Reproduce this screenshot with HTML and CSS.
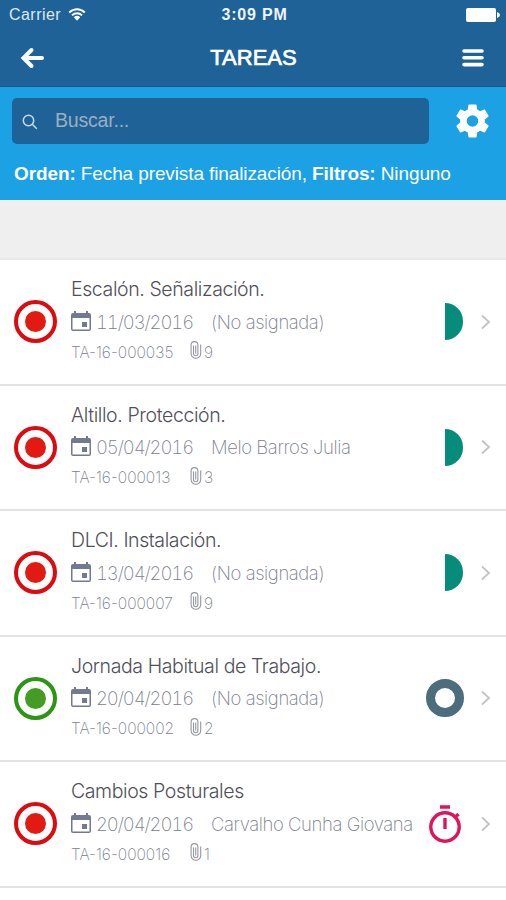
FILE: index.html
```html
<!DOCTYPE html>
<html lang="es">
  <head>
    <meta charset="UTF-8" />
    <meta name="viewport" content="width=device-width, initial-scale=1.0" />
    <title>Tareas</title>
    <link rel="stylesheet" href="styles.css">
  </head>
  <body>
    <!-- Iconos compartidos -->
    <svg class="sprite">
      <symbol id="i-calendar" viewBox="0 0 20 20">
        <path d="M0 4a2 2 0 0 1 2-2h1V0h2v2h10V0h2v2h1a2 2 0 0 1 2 2v14a2 2 0 0 1-2 2H2a2 2 0 0 1-2-2zM1.500 7v11.500h17V7zM11 11h5v5h-5z" fill-rule="evenodd" />
      </symbol>
      <symbol id="i-clip" viewBox="0 0 12 18">
        <path d="M3.500 4.500V12.500a2.200 2.200 0 0 0 4.400 0V4a3.400 3.400 0 0 0-6.800 0v8.500a4.800 4.800 0 0 0 9.600 0V3.500M5.700 4.500v8" />
      </symbol>
      <symbol id="i-chevron" viewBox="0 0 10 16">
        <path d="M1 1.500L8 8l-7 6.500" />
      </symbol>
    </svg>

    <header class="top">
      <div class="status-bar">
        <div class="carrier">
          <span>Carrier</span>
          <svg class="wifi" viewBox="0 0 18 13">
            <path d="M1.200 4.500a11 11 0 0 1 15.600 0M4 7.400a7 7 0 0 1 10 0" />
            <path class="wifi-dot" d="M5.800 9.200a4.500 4.500 0 0 1 6.400 0L9 12.800z" />
          </svg>
        </div>
        <div class="clock">3:09 PM</div>
        <svg class="battery" viewBox="0 0 34 14">
          <rect width="30" height="14" rx="2" />
          <path d="M31 4q3 1 3 3t-3 3z" />
        </svg>
      </div>
      <nav class="nav-bar">
        <svg class="back" viewBox="0 0 24 22">
          <path d="M11.500 3L3.500 11l8 8M4 11h18" />
        </svg>
        <h1>TAREAS</h1>
        <svg class="menu" viewBox="0 0 22 18">
          <path d="M2 2h18M2 8.800h18M2 15.600h18" />
        </svg>
      </nav>
    </header>

    <section class="search">
      <div class="search-row">
        <div class="search-box">
          <svg class="lens" viewBox="0 0 16 16">
            <circle cx="6.500" cy="6.500" r="5.200" />
            <path d="M10.500 10.500l4.300 4.300" />
          </svg>
          <span>Buscar...</span>
        </div>
        <svg class="gear" viewBox="2 2 20 20">
          <path d="M19.430 12.980c.04-.32.070-.64.070-.98s-.03-.66-.07-.98l2.110-1.650c.19-.15.240-.42.120-.64l-2-3.460c-.12-.22-.39-.3-.61-.22l-2.490 1c-.52-.4-1.080-.73-1.690-.98l-.38-2.650C14.460 2.180 14.250 2 14 2h-4c-.25 0-.46.180-.49.420l-.38 2.650c-.61.250-1.170.590-1.690.980l-2.490-1c-.23-.09-.49 0-.61.220l-2 3.460c-.13.220-.07.490.120.640l2.110 1.650c-.04.320-.07.650-.07.980s.030.660.070.980l-2.110 1.650c-.19.150-.24.420-.12.640l2 3.460c.12.220.390.300.610.220l2.490-1c.52.400 1.080.730 1.690.980l.38 2.650c.03.240.240.420.490.420h4c.25 0 .46-.18.490-.42l.38-2.650c.61-.25 1.170-.59 1.690-.98l2.490 1c.23.090.490 0 .610-.22l2-3.460c.12-.22.070-.49-.12-.64zM12 15.500a3.500 3.500 0 1 1 0-7 3.500 3.500 0 0 1 0 7z" />
        </svg>
      </div>
      <p class="filters"><b>Orden:</b> Fecha prevista finalización, <b>Filtros:</b> Ninguno</p>
    </section>

    <div class="gap"></div>

    <!-- Lista de tareas -->
    <ul class="tasks">
      <li class="task">
        <span class="priority red"></span>
        <div class="info">
          <h2>Escalón. Señalización.</h2>
          <div class="line">
            <svg class="calendar"><use href="#i-calendar" /></svg>
            <span class="date">11/03/2016</span>
            <span class="person">(No asignada)</span>
          </div>
          <div class="line small">
            <span class="code">TA-16-000035</span>
            <svg class="clip"><use href="#i-clip" /></svg>
            <span>9</span>
          </div>
        </div>
        <div class="state"><span class="half"></span></div>
        <svg class="chevron"><use href="#i-chevron" /></svg>
      </li>
      <li class="task">
        <span class="priority red"></span>
        <div class="info">
          <h2>Altillo. Protección.</h2>
          <div class="line">
            <svg class="calendar"><use href="#i-calendar" /></svg>
            <span class="date">05/04/2016</span>
            <span class="person">Melo Barros Julia</span>
          </div>
          <div class="line small">
            <span class="code">TA-16-000013</span>
            <svg class="clip"><use href="#i-clip" /></svg>
            <span>3</span>
          </div>
        </div>
        <div class="state"><span class="half"></span></div>
        <svg class="chevron"><use href="#i-chevron" /></svg>
      </li>
      <li class="task">
        <span class="priority red"></span>
        <div class="info">
          <h2>DLCI. Instalación.</h2>
          <div class="line">
            <svg class="calendar"><use href="#i-calendar" /></svg>
            <span class="date">13/04/2016</span>
            <span class="person">(No asignada)</span>
          </div>
          <div class="line small">
            <span class="code">TA-16-000007</span>
            <svg class="clip"><use href="#i-clip" /></svg>
            <span>9</span>
          </div>
        </div>
        <div class="state"><span class="half"></span></div>
        <svg class="chevron"><use href="#i-chevron" /></svg>
      </li>
      <li class="task">
        <span class="priority green"></span>
        <div class="info">
          <h2>Jornada Habitual de Trabajo.</h2>
          <div class="line">
            <svg class="calendar"><use href="#i-calendar" /></svg>
            <span class="date">20/04/2016</span>
            <span class="person">(No asignada)</span>
          </div>
          <div class="line small">
            <span class="code">TA-16-000002</span>
            <svg class="clip"><use href="#i-clip" /></svg>
            <span>2</span>
          </div>
        </div>
        <div class="state"><span class="ring"></span></div>
        <svg class="chevron"><use href="#i-chevron" /></svg>
      </li>
      <li class="task">
        <span class="priority red"></span>
        <div class="info">
          <h2>Cambios Posturales</h2>
          <div class="line">
            <svg class="calendar"><use href="#i-calendar" /></svg>
            <span class="date">20/04/2016</span>
            <span class="person">Carvalho Cunha Giovana</span>
          </div>
          <div class="line small">
            <span class="code">TA-16-000016</span>
            <svg class="clip"><use href="#i-clip" /></svg>
            <span>1</span>
          </div>
        </div>
        <div class="state">
          <svg class="timer" viewBox="0 0 34 38">
            <circle cx="17" cy="22" r="14.200" />
            <path d="M12 2h10M17 13v11M27.500 12l3-3" />
          </svg>
        </div>
        <svg class="chevron"><use href="#i-chevron" /></svg>
      </li>
    </ul>
  </body>
</html>
```
FILE: styles.css
```css
* {
  box-sizing: border-box;
}

body {
  margin: 0;
  height: 900px;
  overflow: hidden;
  background: #fff;
  font-family: "Liberation Sans", Arial, sans-serif;
}

h1,
h2,
p,
ul {
  margin: 0;
  padding: 0;
}

svg {
  flex: none;
  fill: none;
}

.sprite {
  display: none;
}

/* cabecera */
.top {
  height: 87px;
  background: #1f6298;
  border-bottom: 1px solid #1a5688;
  color: #fff;
}

.status-bar {
  display: grid;
  grid-template-columns: 1fr auto 1fr;
  align-items: center;
  height: 29px;
  padding: 0 6px 0 9px;
}

.carrier {
  display: flex;
  align-items: center;
  gap: 7px;
  font-size: 16px;
  letter-spacing: 0.45px;
  color: #dce9f5;
}

.wifi {
  width: 18px;
  height: 13px;
  stroke: #fff;
  stroke-width: 2;
}

.wifi-dot {
  fill: #fff;
  stroke: none;
}

.clock {
  font-size: 16px;
  font-weight: bold;
  letter-spacing: 0.8px;
  color: #eef4fa;
}

.battery {
  justify-self: end;
  width: 34px;
  height: 14px;
  fill: #fff;
}

.nav-bar {
  display: flex;
  align-items: center;
  justify-content: space-between;
  height: 57px;
  padding: 0 22px 0 20px;
}

.nav-bar h1 {
  margin-left: 1px;
  font-size: 22px;
  font-weight: normal;
  -webkit-text-stroke: 0.7px #fff;
}

.back,
.menu {
  stroke: #fff;
  stroke-width: 4;
  stroke-linecap: round;
}

.back {
  width: 24px;
  height: 22px;
}

.menu {
  width: 22px;
  height: 18px;
  stroke-width: 3.6;
}

/* buscador */
.search {
  height: 113px;
  padding: 11px 17px 0 12px;
  background: #1ca1e4;
  color: #fff;
}

.search-row {
  display: flex;
  align-items: center;
  justify-content: space-between;
}

.search-box {
  display: flex;
  align-items: center;
  gap: 17px;
  width: 417px;
  height: 46px;
  padding: 0 0 2px 10px;
  border-radius: 5px;
  background: #1f6298;
  color: #9eaebd;
  font-size: 19.5px;
  letter-spacing: -0.2px;
}

.lens {
  width: 16px;
  height: 16px;
  margin-top: 3px;
  stroke: #c5dbee;
  stroke-width: 1.5;
}

.gear {
  width: 33px;
  height: 34px;
  fill: #fff;
}

.filters {
  margin: 18px 0 0 2px;
  font-size: 19px;
  letter-spacing: -0.11px;
  line-height: 24px;
  white-space: nowrap;
}

.gap {
  height: 60px;
  background: #efefef;
  border-bottom: 2px solid #e9e9e9;
}

/* tareas */
.tasks {
  list-style: none;
}

.task {
  display: flex;
  align-items: center;
  height: 125.5px;
  padding: 0 15px 0 14px;
  border-bottom: 2px solid #e3e3e5;
}

.priority {
  flex: none;
  width: 43px;
  height: 43px;
  border: 4px solid;
  border-radius: 50%;
  padding: 7px;
}

.priority::before {
  content: "";
  display: block;
  height: 100%;
  border-radius: 50%;
  background: currentColor;
}

.red {
  color: #e21a12;
  border-color: #dd0a0f;
}

.green {
  color: #439c24;
  border-color: #2b9612;
}

.info {
  flex: 1;
  margin: 0 0 4px 14px;
  font-family: Inter, "Liberation Sans", sans-serif;
  font-weight: 200;
  white-space: nowrap;
}

.info h2 {
  font-size: 19.5px;
  font-weight: 300;
  line-height: 30px;
  letter-spacing: -0.4px;
  color: #505058;
}

.line {
  display: flex;
  align-items: center;
  height: 35px;
  font-size: 18.5px;
  color: #7b808b;
}

.calendar {
  width: 20px;
  height: 20px;
  margin-bottom: 2px;
  fill: #737990;
}

.date {
  width: 97px;
  margin: 0 18px 0 5px;
  font-variant-numeric: tabular-nums;
  letter-spacing: -1.1px;
}

.person {
  letter-spacing: -0.42px;
}

.small {
  height: 26px;
  font-size: 15.5px;
}

.code {
  width: 102px;
}

.clip {
  width: 12px;
  height: 18px;
  margin: 0 2px 4px 17px;
  stroke: #94979f;
  stroke-width: 1.1;
}

.state {
  display: flex;
  justify-content: center;
  flex: none;
  width: 38px;
}

.half {
  width: 18px;
  height: 37px;
  margin-left: 18px;
  border-radius: 0 18px 18px 0;
  background: #078b7b;
}

.ring {
  width: 38px;
  height: 38px;
  border: 9px solid #4b6d7c;
  border-radius: 50%;
}

.timer {
  width: 34px;
  height: 38px;
  stroke: #e0135c;
  stroke-width: 3.4;
}

.chevron {
  width: 10px;
  height: 16px;
  margin-left: 17px;
  stroke: #c3c3c7;
  stroke-width: 1.8;
}
```
